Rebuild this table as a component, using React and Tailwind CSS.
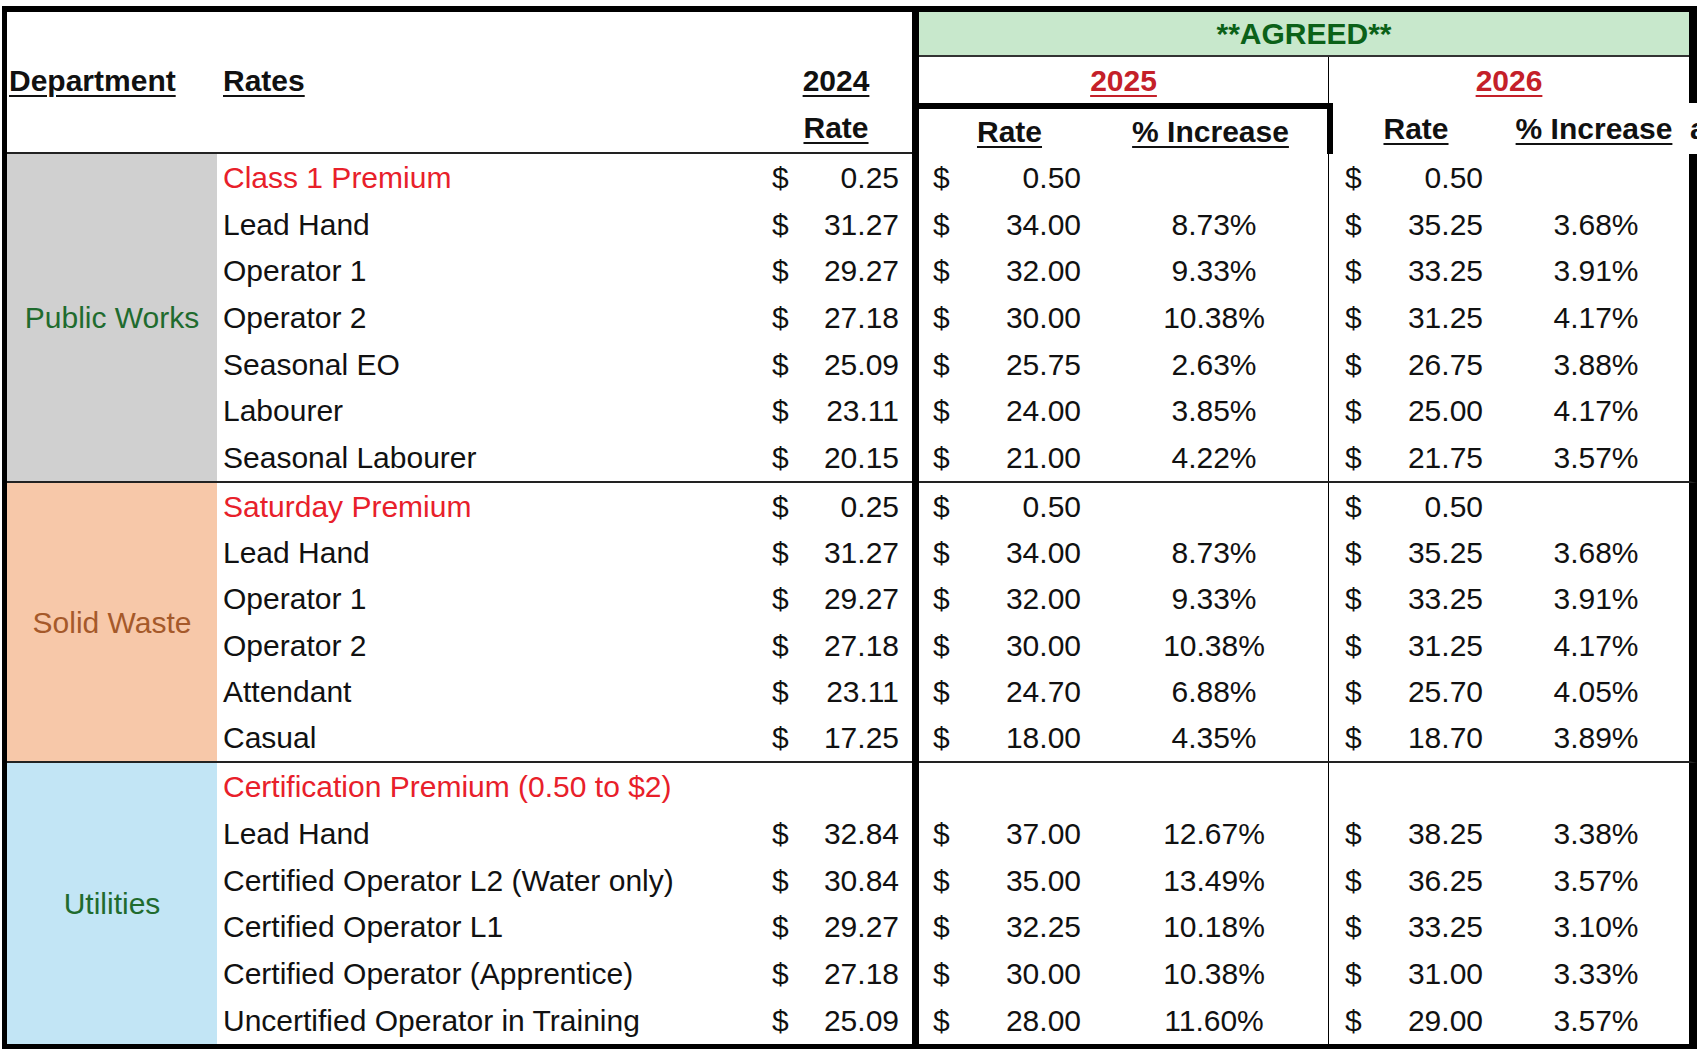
import React from 'react';

const sections = [
  {
    name: 'Public Works',
    bg: 'bg-[#d0d0d0]',
    color: 'text-[#1f6b2e]',
    height: 'h-[329px]',
    rows: [
      { label: 'Class 1 Premium', red: true, r24: '0.25', r25: '0.50', p25: '', r26: '0.50', p26: '' },
      { label: 'Lead Hand', r24: '31.27', r25: '34.00', p25: '8.73%', r26: '35.25', p26: '3.68%' },
      { label: 'Operator 1', r24: '29.27', r25: '32.00', p25: '9.33%', r26: '33.25', p26: '3.91%' },
      { label: 'Operator 2', r24: '27.18', r25: '30.00', p25: '10.38%', r26: '31.25', p26: '4.17%' },
      { label: 'Seasonal EO', r24: '25.09', r25: '25.75', p25: '2.63%', r26: '26.75', p26: '3.88%' },
      { label: 'Labourer', r24: '23.11', r25: '24.00', p25: '3.85%', r26: '25.00', p26: '4.17%' },
      { label: 'Seasonal Labourer', r24: '20.15', r25: '21.00', p25: '4.22%', r26: '21.75', p26: '3.57%' },
    ],
  },
  {
    name: 'Solid Waste',
    bg: 'bg-[#f7c8a9]',
    color: 'text-[#a5592a]',
    height: 'h-[280px]',
    rows: [
      { label: 'Saturday Premium', red: true, r24: '0.25', r25: '0.50', p25: '', r26: '0.50', p26: '' },
      { label: 'Lead Hand', r24: '31.27', r25: '34.00', p25: '8.73%', r26: '35.25', p26: '3.68%' },
      { label: 'Operator 1', r24: '29.27', r25: '32.00', p25: '9.33%', r26: '33.25', p26: '3.91%' },
      { label: 'Operator 2', r24: '27.18', r25: '30.00', p25: '10.38%', r26: '31.25', p26: '4.17%' },
      { label: 'Attendant', r24: '23.11', r25: '24.70', p25: '6.88%', r26: '25.70', p26: '4.05%' },
      { label: 'Casual', r24: '17.25', r25: '18.00', p25: '4.35%', r26: '18.70', p26: '3.89%' },
    ],
  },
  {
    name: 'Utilities',
    bg: 'bg-[#c2e5f5]',
    color: 'text-[#1f6b2e]',
    height: 'h-[281px]',
    last: true,
    rows: [
      { label: 'Certification Premium (0.50 to $2)', red: true, r24: '', r25: '', p25: '', r26: '', p26: '' },
      { label: 'Lead Hand', r24: '32.84', r25: '37.00', p25: '12.67%', r26: '38.25', p26: '3.38%' },
      { label: 'Certified Operator L2 (Water only)', r24: '30.84', r25: '35.00', p25: '13.49%', r26: '36.25', p26: '3.57%' },
      { label: 'Certified Operator L1', r24: '29.27', r25: '32.25', p25: '10.18%', r26: '33.25', p26: '3.10%' },
      { label: 'Certified Operator (Apprentice)', r24: '27.18', r25: '30.00', p25: '10.38%', r26: '31.00', p26: '3.33%' },
      { label: 'Uncertified Operator in Training', r24: '25.09', r25: '28.00', p25: '11.60%', r26: '29.00', p26: '3.57%' },
    ],
  },
];

const ul = 'underline decoration-[2px] underline-offset-[4px]';

function Money({ value, className }) {
  return (
    <div className={`flex justify-between ${className}`}>
      {value ? (
        <>
          <span>$</span>
          <span>{value}</span>
        </>
      ) : null}
    </div>
  );
}

export default function App() {
  return (
    <div className="w-[1700px] h-[1056px] bg-white pt-[6px] pl-[2px] text-[30px] text-[#111] font-['Liberation_Sans',Arial,sans-serif]">
      <div className="w-[1695px] flex border-t-[6px] border-b-[5px] border-l-[5px] border-black">
        {/* left part: department, rates, 2024 */}
        <div className="w-[905px] flex flex-col">
          <div className="h-[142px] flex flex-col border-b-2 border-[#222] font-bold">
            <div className="h-[45px]" />
            <div className="h-[46px] flex items-center">
              <div className="w-[210px] pl-[2px]"><span className={ul}>Department</span></div>
              <div className="w-[543px] pl-[6px]"><span className={ul}>Rates</span></div>
              <div className="w-[152px] text-center"><span className={ul}>2024</span></div>
            </div>
            <div className="flex-1 flex items-center">
              <div className="w-[753px]" />
              <div className="w-[152px] text-center"><span className={ul}>Rate</span></div>
            </div>
          </div>

          {sections.map((s) => (
            <div key={s.name} className={`${s.height} flex ${s.last ? '' : 'border-b-2 border-[#222]'}`}>
              <div className={`w-[210px] flex items-center justify-center ${s.bg} ${s.color}`}>{s.name}</div>
              <div className="w-[695px] flex flex-col">
                {s.rows.map((r, i) => (
                  <div key={i} className="flex-1 flex items-center">
                    <div className={`w-[543px] pl-[6px] whitespace-nowrap ${r.red ? 'text-[#e8202a]' : ''}`}>{r.label}</div>
                    <Money value={r.r24} className="w-[152px] pl-[12px] pr-[13px]" />
                  </div>
                ))}
              </div>
            </div>
          ))}
        </div>

        {/* agreed part: 2025 and 2026 */}
        <div className="w-[785px] flex flex-col border-l-[7px] border-black">
          <div className="h-[142px] flex flex-col font-bold">
            <div className="h-[45px] flex border-r-[8px] border-black">
              <div className="flex-1 flex items-center justify-center bg-[#c8e8cc] border-b-2 border-[#333] text-[#0b6118]">
                **AGREED**
              </div>
            </div>
            <div className="h-[46px] flex border-r-[8px] border-black text-[#c42029]">
              <div className="w-[409px] flex items-center justify-center"><span className={ul}>2025</span></div>
              <div className="w-px bg-black" />
              <div className="flex-1 flex items-center justify-center"><span className={ul}>2026</span></div>
            </div>
            <div className="flex-1 flex">
              <div className="w-[414px] flex items-center border-t-[6px] border-r-[6px] border-black">
                <div className="w-[181px] text-center"><span className={ul}>Rate</span></div>
                <div className="flex-1 text-center pr-[6px]"><span className={ul}>% Increase</span></div>
              </div>
              <div className="w-[166px] flex items-center justify-center"><span className={ul}>Rate</span></div>
              <div className="w-[190px] flex items-center justify-center"><span className={ul}>% Increase</span></div>
              <div className="w-[8px] overflow-hidden flex items-center">
                <span className="pl-[1px]">a</span>
              </div>
            </div>
          </div>

          {sections.map((s) => (
            <div key={s.name} className={`${s.height} flex border-r-[8px] border-black ${s.last ? '' : 'border-b-2 border-b-[#222]'}`}>
              <div className="w-[409px] flex flex-col">
                {s.rows.map((r, i) => (
                  <div key={i} className="flex-1 flex items-center">
                    <Money value={r.r25} className="w-[181px] pl-[14px] pr-[19px]" />
                    <div className="flex-1 text-center">{r.p25}</div>
                  </div>
                ))}
              </div>
              <div className="w-px bg-black" />
              <div className="flex-1 flex flex-col">
                {s.rows.map((r, i) => (
                  <div key={i} className="flex-1 flex items-center">
                    <Money value={r.r26} className="w-[174px] pl-[16px] pr-[20px]" />
                    <div className="flex-1 text-center">{r.p26}</div>
                  </div>
                ))}
              </div>
            </div>
          ))}
        </div>
      </div>
    </div>
  );
}
